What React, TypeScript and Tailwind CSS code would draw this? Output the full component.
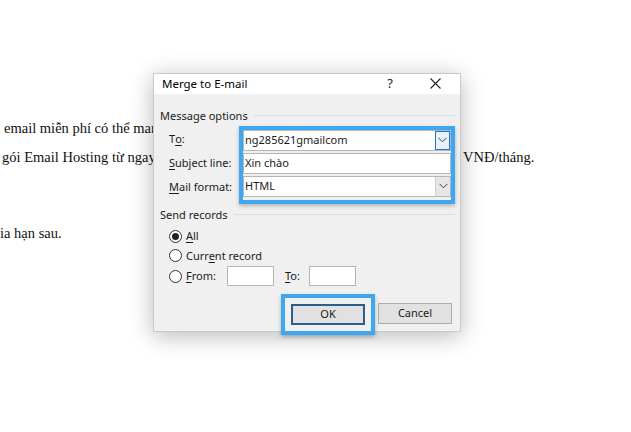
import React from "react";

const ui = { fontFamily: '"Noto Sans", "Open Sans", sans-serif' };
const serif = { fontFamily: '"Liberation Serif", "Times New Roman", serif' };

function Chevron() {
  return (
    <svg width="9" height="6" viewBox="0 0 9 6" aria-hidden="true">
      <path d="M0.5 0.8 L4.5 4.8 L8.5 0.8" fill="none" stroke="#444" strokeWidth="1" />
    </svg>
  );
}

function Radio({ checked }: { checked?: boolean }) {
  return (
    <span className="flex h-[13px] w-[13px] shrink-0 items-center justify-center rounded-full border border-[#333] bg-white">
      {checked && <span className="h-[7px] w-[7px] rounded-full bg-[#222]" />}
    </span>
  );
}

function GroupTitle({ children }: { children: React.ReactNode }) {
  return (
    <div className="flex items-center gap-[6px]">
      <span className="whitespace-nowrap">{children}</span>
      <span className="h-px flex-1 bg-[#dcdcdc]" />
    </div>
  );
}

// access-key letter, underlined like a Win32 label
function Key({ children }: { children: React.ReactNode }) {
  return <u className="underline-offset-2">{children}</u>;
}

function MergeDialog() {
  return (
    <div
      className="absolute left-[153px] top-[73px] flex h-[259px] w-[308px] flex-col border border-[#c9c9c9] bg-[#f0f0f0] text-[11px] text-[#1a1a1a] shadow-[0_4px_22px_rgba(0,0,0,0.28)]"
      style={ui}
    >
      {/* title bar */}
      <div className="flex h-[28px] items-center bg-white pl-[8px] pr-[19px]">
        <span className="text-[11.5px] text-black">Merge to E-mail</span>
        <span className="ml-auto mr-[37px] text-[13px] text-[#222]">?</span>
        <svg width="11" height="11" viewBox="0 0 11 11" aria-hidden="true">
          <path d="M0.5 0.5 L10.5 10.5 M10.5 0.5 L0.5 10.5" stroke="#222" strokeWidth="1.1" />
        </svg>
      </div>

      <div className="flex flex-1 flex-col pl-[6px] pr-[5px]">
        <div className="mt-[14px] leading-[16px]">
          <GroupTitle>Message options</GroupTitle>
        </div>

        <div className="mt-[2px] flex">
          <div className="flex w-[79px] flex-col pl-[9px] pt-[2px] leading-[16px]">
            <p className="flex h-[23px] items-center">
              T<Key>o</Key>:
            </p>
            <p className="flex h-[24px] items-center">
              <Key>S</Key>ubject line:
            </p>
            <p className="flex h-[24px] items-center">
              <Key>M</Key>ail format:
            </p>
          </div>

          <div className="flex w-[216px] flex-col gap-[2px] border-4 border-[#3fa6f2] pb-[3px] shadow-[0_2px_4px_rgba(0,0,0,0.25)]">
            <div className="flex h-[21px] items-center border border-[#b5b5b5] bg-white pl-[1px]">
              <span className="flex-1">ng285621gmailcom</span>
              <span className="flex h-[19px] w-[15px] items-center justify-center border border-[#2a74c0] bg-[#e5f1fb]">
                <Chevron />
              </span>
            </div>
            <div className="flex h-[21px] items-center border border-[#b5b5b5] bg-white pl-[1px]">
              Xin chào
            </div>
            <div className="flex h-[21px] items-center border border-[#b5b5b5] bg-white pl-[1px]">
              <span className="flex-1">HTML</span>
              <span className="flex h-[19px] w-[15px] items-center justify-center border-l border-[#d0d0d0] bg-[#e6e6e6]">
                <Chevron />
              </span>
            </div>
          </div>
        </div>

        <div className="mt-[3px] leading-[16px]">
          <GroupTitle>Send records</GroupTitle>
        </div>

        <div className="mt-[4px] flex flex-col pl-[9px] leading-[16px]">
          <div className="flex h-[19px] items-center gap-[4px]">
            <Radio checked />
            <span>
              <Key>A</Key>ll
            </span>
          </div>
          <div className="flex h-[20px] items-center gap-[4px]">
            <Radio />
            <span>
              Curr<Key>e</Key>nt record
            </span>
          </div>
          <div className="flex h-[21px] items-center gap-[4px]">
            <Radio />
            <span className="w-[37px]">
              <Key>F</Key>rom:
            </span>
            <span className="h-[20px] w-[47px] border border-[#b5b5b5] bg-white" />
            <span className="ml-[7px] w-[20px]">
              <Key>T</Key>o:
            </span>
            <span className="h-[20px] w-[47px] border border-[#b5b5b5] bg-white" />
          </div>
        </div>

        <div className="mt-[7px] flex items-start justify-end pr-[3px]">
          <div className="border-4 border-[#3fa6f2] px-[6px] pb-[6px] pt-[6px] shadow-[0_2px_4px_rgba(0,0,0,0.25)]">
            <div className="flex h-[21px] w-[74px] items-center justify-center border-2 border-[#2b5d91] bg-[#e1e1e1]">
              OK
            </div>
          </div>
          <div className="ml-[3px] mt-[9px] flex h-[21px] w-[74px] items-center justify-center border border-[#adadad] bg-[#e1e1e1]">
            Cancel
          </div>
        </div>
      </div>
    </div>
  );
}

export default function App() {
  return (
    <div className="relative h-[432px] w-[631px] overflow-hidden bg-white text-[14.5px] text-[#111]" style={serif}>
      <div className="flex flex-col pt-[118px]">
        <div className="h-[20px] w-[155px] overflow-hidden whitespace-nowrap pl-[4px]">email miễn phí có thể mar</div>
        <div className="mt-[9px] flex h-[20px] whitespace-nowrap">
          <span className="w-[155px] overflow-hidden pl-[2px]">gói Email Hosting từ ngay</span>
          <span className="ml-[308px]">VNĐ/tháng.</span>
        </div>
        <div className="mt-[56px] h-[20px] whitespace-nowrap">ia hạn sau.</div>
      </div>
      <MergeDialog />
    </div>
  );
}
